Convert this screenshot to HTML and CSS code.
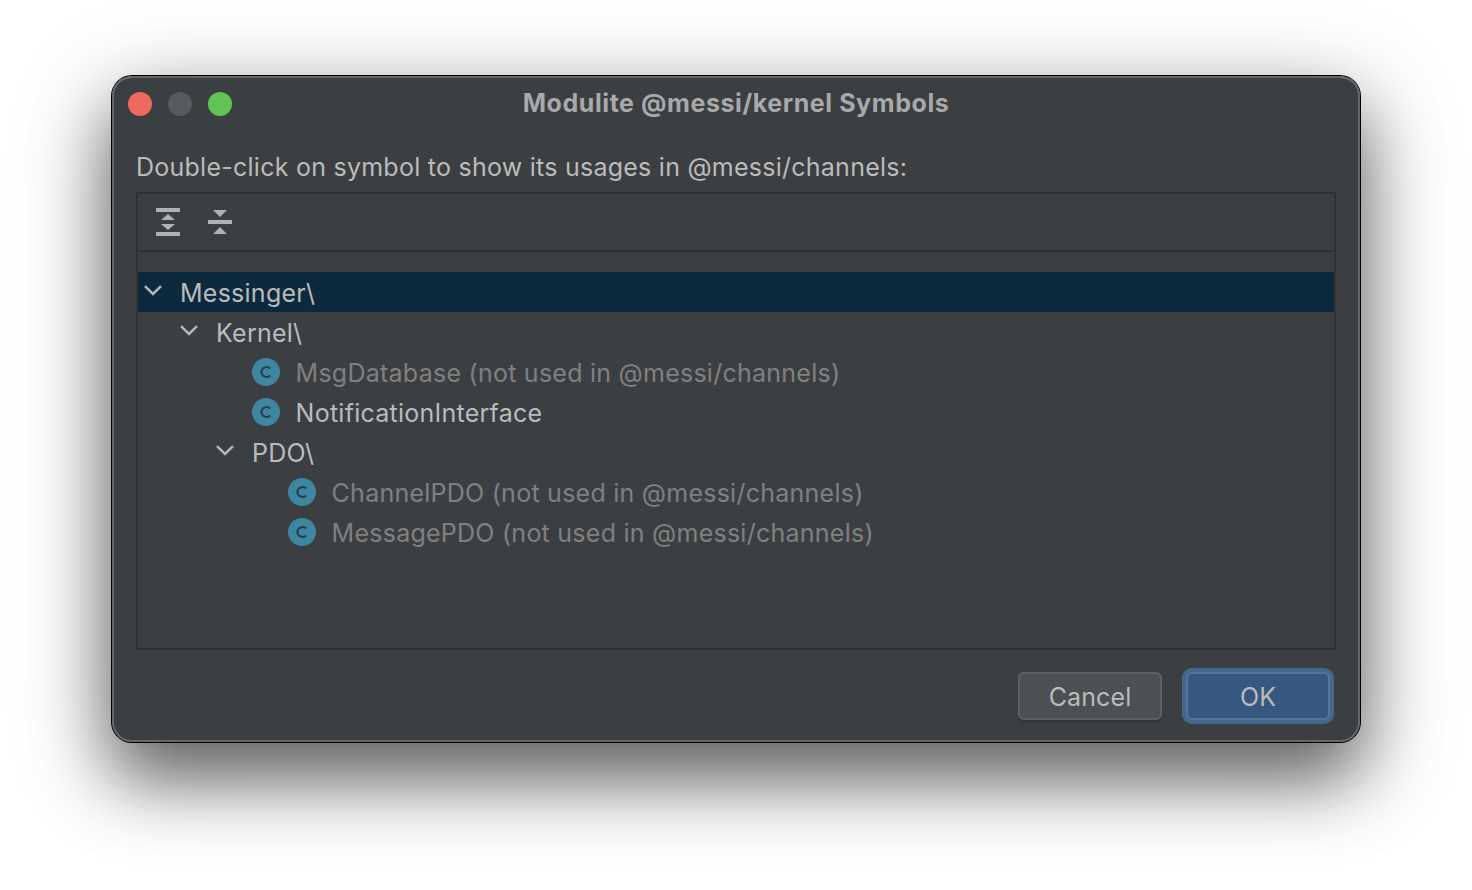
FILE: index.html
```html
<!DOCTYPE html>
<html lang="en">
<head>
<meta charset="utf-8">
<title>Modulite @messi/kernel Symbols</title>
<link rel="stylesheet" href="styles.css">
</head>
<body>
<svg class="defs" width="0" height="0" aria-hidden="true">
  <symbol id="chevron" viewBox="0 0 20 14"><path d="M2 2.2 10 10 18 2.2" fill="none" stroke="currentColor" stroke-width="2.5"/></symbol>
  <symbol id="class-icon" viewBox="0 0 28 28"><circle cx="14" cy="14" r="14" fill="#3e86a0"/><path d="M18.2 10.6A5.1 5 0 1 0 18.2 17.4" fill="none" stroke="#24414d" stroke-width="2.2"/></symbol>
</svg>
<main class="window">
  <header class="titlebar">
    <div class="lights"><span class="light close"></span><span class="light minimize"></span><span class="light zoom"></span></div>
    <h1 class="title">Modulite @messi/kernel Symbols</h1>
  </header>
  <p class="hint">Double-click on symbol to show its usages in @messi/channels:</p>
  <section class="panel">
    <div class="toolbar">
      <svg width="24" height="28" viewBox="0 0 24 28" fill="#afb1b3"><path d="M0 0h24v4H0zM0 24h24v4H0zM12 6l7 6H5zM5 16h14l-7 6z"/></svg>
      <svg width="24" height="28" viewBox="0 0 24 28" fill="#afb1b3"><path d="M5 2h14l-7 7zM0 12h24v4H0zM12 19l7 7H5z"/></svg>
    </div>
    <ul class="tree">
      <li class="row selected"><svg class="chevron"><use href="#chevron"/></svg><span>Messinger\</span></li>
      <li class="row level-1"><svg class="chevron"><use href="#chevron"/></svg><span>Kernel\</span></li>
      <li class="row level-3 unused"><svg class="class-icon"><use href="#class-icon"/></svg><span>MsgDatabase (not used in @messi/channels)</span></li>
      <li class="row level-3"><svg class="class-icon"><use href="#class-icon"/></svg><span>NotificationInterface</span></li>
      <li class="row level-2"><svg class="chevron"><use href="#chevron"/></svg><span>PDO\</span></li>
      <li class="row level-4 unused"><svg class="class-icon"><use href="#class-icon"/></svg><span>ChannelPDO (not used in @messi/channels)</span></li>
      <li class="row level-4 unused"><svg class="class-icon"><use href="#class-icon"/></svg><span>MessagePDO (not used in @messi/channels)</span></li>
    </ul>
  </section>
  <footer class="actions">
    <button class="button cancel">Cancel</button>
    <button class="button ok">OK</button>
  </footer>
</main>
</body>
</html>
```
FILE: styles.css
```css
* { box-sizing: border-box; }
body {
  margin: 0;
  height: 890px;
  padding: 76px 112px;
  background: #fff;
  color: #bbb;
  font: 25px/30px Inter, "Liberation Sans", sans-serif;
  letter-spacing: .25px;
  overflow: hidden;
}
.defs { display: block; height: 0; }
.window {
  height: 666px;
  padding: 0 24px;
  border-radius: 20px;
  background: #3c3f41;
  box-shadow: inset 0 0 0 2px #646668, inset 0 2px 0 #7b7d7e, 0 0 0 1px #000, 0 36px 70px rgba(0, 0, 0, .53), 0 24px 100px rgba(0, 0, 0, .25);
}
.titlebar {
  height: 56px;
  margin: 0 -8px;
  display: grid;
  grid-template-columns: 104px 1fr 104px;
  align-items: center;
}
.lights { display: flex; gap: 16px; }
.light { width: 24px; height: 24px; border-radius: 50%; }
.close { background: #ee6a5f; }
.minimize { background: #585b5d; }
.zoom { background: #61c454; }
.title {
  margin: 0;
  padding-bottom: 2px;
  color: #a7a9aa;
  font-size: 25px;
  font-weight: 700;
  line-height: 30px;
  text-align: center;
  white-space: nowrap;
  letter-spacing: .58px;
}
.hint { margin: 20px 0 10px; white-space: nowrap; }
.panel { height: 458px; border: 2px solid #323232; }
.toolbar {
  height: 58px;
  padding: 0 18px;
  display: flex;
  align-items: center;
  gap: 28px;
  border-bottom: 2px solid #323232;
}
.tree { margin: 20px 0 0; padding: 0; list-style: none; }
.row {
  height: 40px;
  padding-left: 5px;
  display: flex;
  align-items: center;
  white-space: nowrap;
}
.row span { padding-top: 2px; }
.selected { background: #0d293e; }
.level-1 { padding-left: 41px; }
.level-2 { padding-left: 77px; }
.level-3 { padding-left: 114px; }
.level-4 { padding-left: 150px; }
.unused { color: #808080; }
.chevron { width: 20px; height: 14px; margin: 0 17px 2px 0; color: #b4b6b8; }
.class-icon { width: 28px; height: 28px; margin-right: 15.6px; }
.actions { margin-top: 22px; padding-right: 6px; display: flex; justify-content: flex-end; gap: 24px; }
.button {
  width: 144px;
  height: 48px;
  padding: 2px 0 0;
  border: 2px solid #5e6060;
  border-radius: 6px;
  background: #4c5052;
  box-shadow: 0 3px 0 #363839;
  color: #bbb;
  font: inherit;
  letter-spacing: .1px;
}
.ok {
  border-color: #537699;
  background: #365880;
  box-shadow: 0 0 0 4px #43688c;
}
```
